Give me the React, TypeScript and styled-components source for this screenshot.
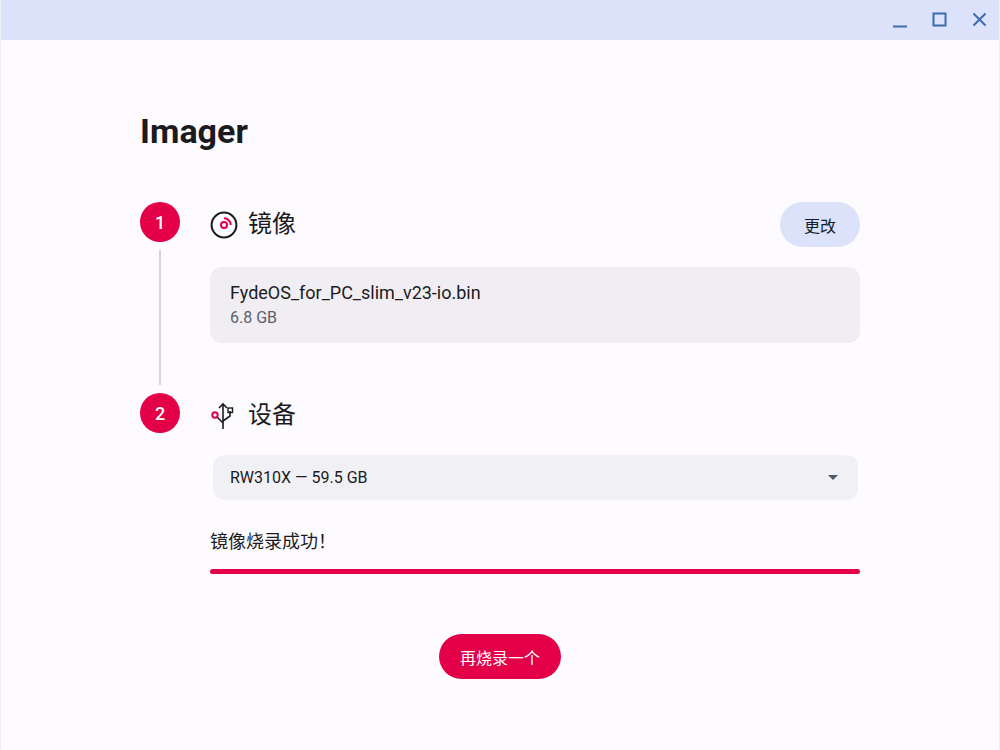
import * as React from 'react'
import styled, {createGlobalStyle} from 'styled-components'

const GlobalStyle = createGlobalStyle`
    html, body {
        margin: 0;
        padding: 0;
        background: #fdfbff;
    }
    * {
        box-sizing: border-box;
    }
`

const FONT = `Roboto, "Noto Sans CJK SC", sans-serif`
const ACCENT = '#e30048'

const MinimizeIcon = () => (
    <svg width="16" height="16" viewBox="0 0 16 16">
        <path d="M1 14.5h14" stroke="#3e6bad" strokeWidth="2" fill="none" />
    </svg>
)

const MaximizeIcon = () => (
    <svg width="16" height="16" viewBox="0 0 16 16">
        <rect x="1.5" y="1.5" width="12" height="12" stroke="#3e6bad" strokeWidth="2" fill="none" />
    </svg>
)

const CloseIcon = () => (
    <svg width="16" height="16" viewBox="0 0 16 16">
        <path d="M1.5 1.5l12 12M13.5 1.5l-12 12" stroke="#3e6bad" strokeWidth="2" fill="none" />
    </svg>
)

const DiscIcon = () => (
    <svg width="28" height="28" viewBox="0 0 28 28" fill="none">
        <circle cx="14" cy="14" r="12.4" stroke="#1b1b1f" strokeWidth="2" />
        <circle cx="14" cy="14" r="3" stroke={ACCENT} strokeWidth="2" />
        <path d="M14 7.2a6.8 6.8 0 0 1 6.8 6.8" stroke={ACCENT} strokeWidth="2" />
    </svg>
)

const UsbIcon = () => (
    <svg width="24" height="28" viewBox="0 0 24 28" fill="none">
        <path d="M13 27V2M9 6l4-4 4 4" stroke="#1b1b1f" strokeWidth="1.6" />
        <path d="M13 19l7-5V9" stroke="#1b1b1f" strokeWidth="1.6" />
        <rect x="18" y="6" width="4.5" height="4.5" stroke="#1b1b1f" strokeWidth="1.4" />
        <path d="M13 21l-6-6" stroke="#1b1b1f" strokeWidth="1.6" />
        <circle cx="5" cy="13" r="2.7" stroke={ACCENT} strokeWidth="2" />
    </svg>
)

export default function App() {
    return (
        <Window>
            <GlobalStyle />
            <TitleBar>
                <WindowButton><MinimizeIcon /></WindowButton>
                <WindowButton><MaximizeIcon /></WindowButton>
                <WindowButton><CloseIcon /></WindowButton>
            </TitleBar>
            <Content>
                <Heading>Imager</Heading>
                <Step>
                    <Rail>
                        <StepNumber>1</StepNumber>
                        <Connector />
                    </Rail>
                    <StepBody>
                        <StepHeader>
                            <StepIcon><DiscIcon /></StepIcon>
                            <StepTitle>镜像</StepTitle>
                            <ChangeButton>更改</ChangeButton>
                        </StepHeader>
                        <FileCard>
                            <FileName>FydeOS_for_PC_slim_v23-io.bin</FileName>
                            <FileSize>6.8 GB</FileSize>
                        </FileCard>
                    </StepBody>
                </Step>
                <Step>
                    <Rail>
                        <StepNumber>2</StepNumber>
                    </Rail>
                    <StepBody>
                        <StepHeader>
                            <StepIcon><UsbIcon /></StepIcon>
                            <StepTitle>设备</StepTitle>
                        </StepHeader>
                        <DeviceSelect>
                            RW310X — 59.5 GB
                            <Caret />
                        </DeviceSelect>
                        <Status>镜像烧录成功！</Status>
                        <Progress />
                    </StepBody>
                </Step>
                <Footer>
                    <PrimaryButton>再烧录一个</PrimaryButton>
                </Footer>
            </Content>
        </Window>
    )
}

const Window = styled('div')`
    width: 1000px;
    height: 750px;
    overflow: hidden;
    background: #fdfbff;
    font-family: ${FONT};
    color: #1b1b1f;
    border-left: 1px solid #eeeef2;
    border-right: 1px solid #eeeef2;
`

const TitleBar = styled('div')`
    height: 40px;
    margin: 0 -1px;
    background: #dbe2f9;
    display: flex;
    justify-content: flex-end;
    align-items: center;
    gap: 24px;
    padding-right: 12px;
`

const WindowButton = styled('div')`
    width: 16px;
    height: 16px;
    display: flex;
`

const Content = styled('div')`
    width: 720px;
    margin-left: 139px;
`

const Heading = styled('h1')`
    margin: 0;
    padding-top: 70px;
    height: 162px;
    font-size: 34px;
    line-height: 42px;
    font-weight: 700;
    color: #1b1b1f;
`

const Step = styled('div')`
    display: flex;
    gap: 30px;
`

const Rail = styled('div')`
    width: 40px;
    display: flex;
    flex-direction: column;
    align-items: center;
`

const StepNumber = styled('div')`
    width: 40px;
    height: 40px;
    flex: none;
    border-radius: 50%;
    background: ${ACCENT};
    color: #fff;
    font-size: 18px;
    font-weight: 500;
    display: flex;
    align-items: center;
    justify-content: center;
`

const Connector = styled('div')`
    width: 2px;
    flex: 1;
    margin: 8px 0;
    background: #d6d6da;
`

const StepBody = styled('div')`
    width: 650px;
`

const StepHeader = styled('div')`
    height: 45px;
    display: flex;
    align-items: center;
`

const StepIcon = styled('div')`
    width: 28px;
    height: 28px;
    display: flex;
    margin-right: 10px;
`

const StepTitle = styled('div')`
    font-size: 24px;
    line-height: 45px;
    flex: 1;
    color: #1b1b1f;
`

const ChangeButton = styled('button')`
    width: 80px;
    height: 45px;
    border: 0;
    border-radius: 23px;
    background: #dbe2f9;
    color: #131c2c;
    font-family: ${FONT};
    font-size: 16px;
`

const FileCard = styled('div')`
    margin-top: 20px;
    height: 76px;
    margin-bottom: 50px;
    padding: 14px 20px 0;
    border-radius: 12px;
    background: #f0eef2;
`

const FileName = styled('div')`
    font-size: 18px;
    line-height: 24px;
    color: #1b1b1f;
`

const FileSize = styled('div')`
    font-size: 16px;
    line-height: 22px;
    margin-top: 2px;
    color: #5a6170;
`

const DeviceSelect = styled('div')`
    margin: 17px 2px 0 3px;
    height: 45px;
    padding: 0 20px 0 17px;
    border-radius: 12px;
    background: #f0f0f5;
    display: flex;
    align-items: center;
    justify-content: space-between;
    font-size: 16px;
    color: #1b1b1f;
`

const Caret = styled('span')`
    width: 0;
    height: 0;
    border-left: 5px solid transparent;
    border-right: 5px solid transparent;
    border-top: 5px solid #50566c;
`

const Status = styled('div')`
    margin-top: 28px;
    font-size: 18px;
    line-height: 27px;
    color: #1b1b1f;
`

const Progress = styled('div')`
    margin-top: 14px;
    height: 5px;
    border-radius: 3px;
    background: ${ACCENT};
`

const Footer = styled('div')`
    display: flex;
    justify-content: center;
    padding-top: 60px;
`

const PrimaryButton = styled('button')`
    width: 122px;
    height: 45px;
    border: 0;
    border-radius: 23px;
    background: ${ACCENT};
    color: #fff;
    font-family: ${FONT};
    font-size: 16px;
`
